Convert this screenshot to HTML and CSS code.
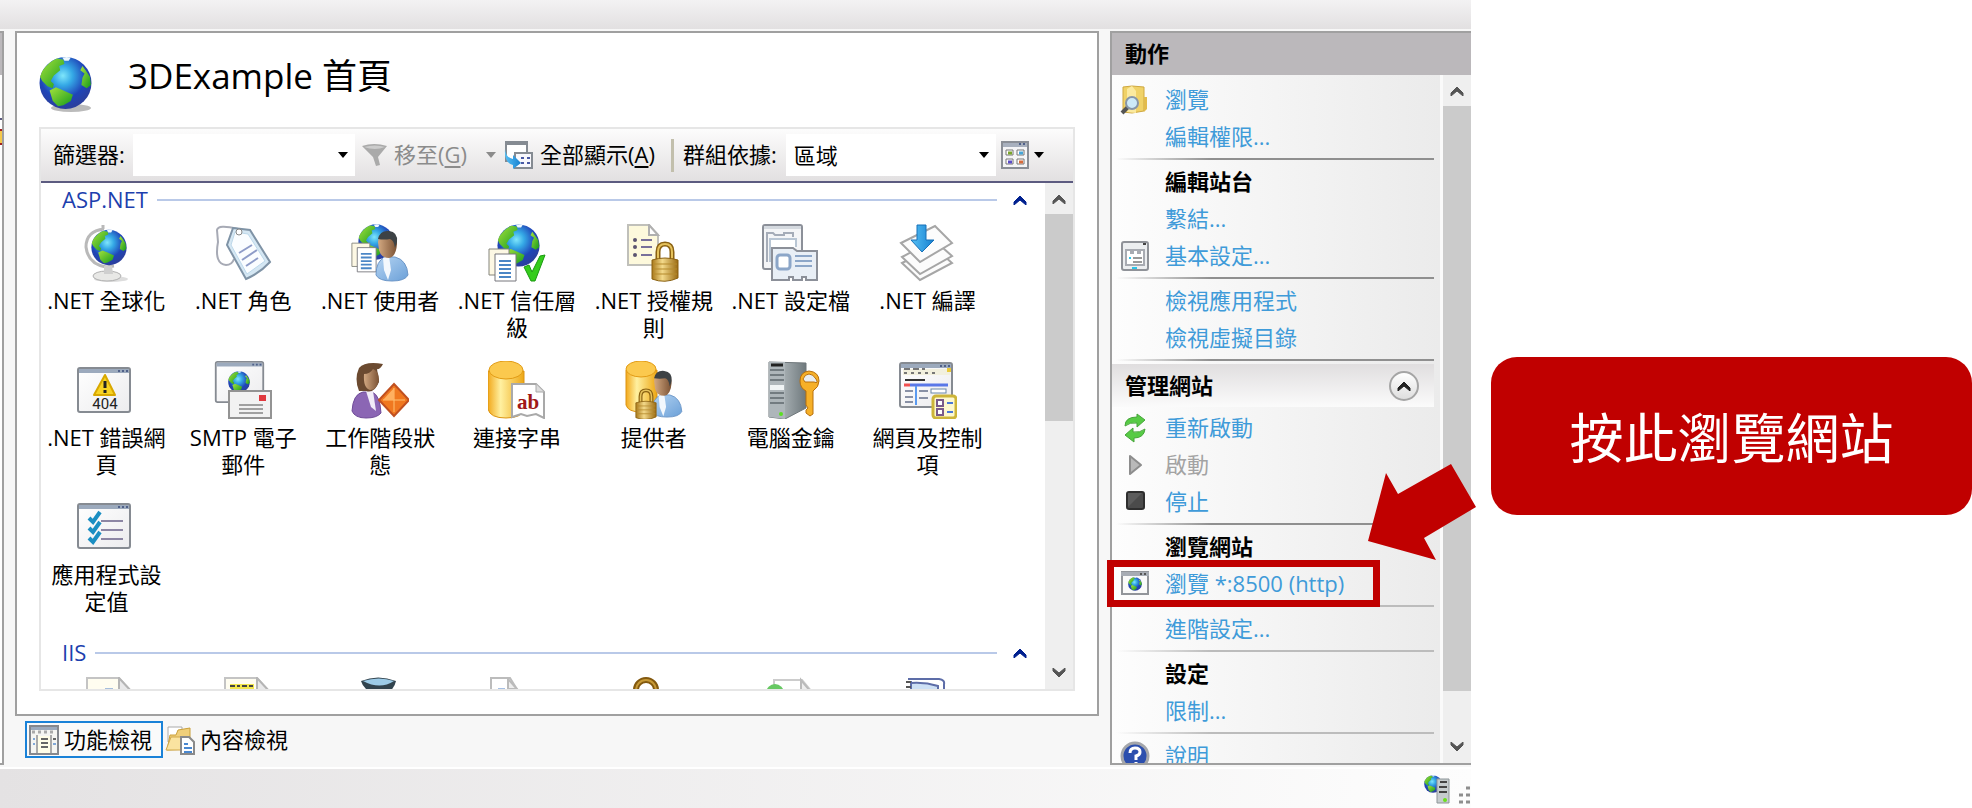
FILE: index.html
```html
<!DOCTYPE html>
<html lang="zh-Hant">
<head>
<meta charset="utf-8">
<title>3DExample 首頁</title>
<link rel="stylesheet" href="styles.css">
</head>
<body>
<svg class="defs" aria-hidden="true">
  <defs>
    <radialGradient id="sea" cx=".45" cy=".36" r=".62"><stop offset="0" stop-color="#7fe6fb"/><stop offset=".3" stop-color="#35a9e6"/><stop offset=".7" stop-color="#1f45b8"/><stop offset="1" stop-color="#2a3f9e"/></radialGradient>
    <linearGradient id="land" x1="0" y1="0" x2="1" y2="1"><stop offset="0" stop-color="#a5e23c"/><stop offset="1" stop-color="#149a1c"/></linearGradient>
    <linearGradient id="gold" x1="0" x2="1"><stop offset="0" stop-color="#f2a91c"/><stop offset=".35" stop-color="#fff0a0"/><stop offset="1" stop-color="#eda714"/></linearGradient>
    <linearGradient id="brass" x1="0" x2="1"><stop offset="0" stop-color="#a9781a"/><stop offset=".4" stop-color="#f3d98a"/><stop offset="1" stop-color="#9a6a12"/></linearGradient>
    <linearGradient id="shirt" x1="0" x2="1" y2="1"><stop offset="0" stop-color="#b5d4f2"/><stop offset="1" stop-color="#6ba0d8"/></linearGradient>
    <linearGradient id="skin" x1="0" x2="1"><stop offset="0" stop-color="#d3a982"/><stop offset="1" stop-color="#7a5133"/></linearGradient>
    <linearGradient id="pane" x1="0" x2="1" y2="1"><stop offset="0" stop-color="#ffffff"/><stop offset="1" stop-color="#ececee"/></linearGradient>
    <linearGradient id="steel" x1="0" x2="1"><stop offset="0" stop-color="#c9d0d3"/><stop offset="1" stop-color="#6f797d"/></linearGradient>
    <linearGradient id="arrow" x1="0" x2="1"><stop offset="0" stop-color="#55c0f5"/><stop offset="1" stop-color="#1780d0"/></linearGradient>
    <symbol id="globe" viewBox="0 0 50 50">
      <circle cx="25" cy="25" r="24.5" fill="url(#sea)"/>
      <path d="M3 14Q9 5 17 2l6 1 1 4-5 2 1 4-6 5-3 5 3 3-1 4-5-2-5-5-2-4z" fill="url(#land)"/>
      <path d="M10 32l6-3 7 3 9 4-2 6-7 4-5 1-5-5z" fill="url(#land)"/>
      <path d="M41 9l3 4 4 6 1 8-4 3-5-3 1-7 2-4-4-3z" fill="url(#land)"/>
      <path d="M22 1q4-1 8 0l-2 3h-4z" fill="#eef8ff"/>
    </symbol>
    <symbol id="docs" viewBox="0 0 29 34">
      <path d="M1 1h20v26H1z" fill="#fdf8e4" stroke="#85857c"/>
      <path d="M7 6h21v27H7z" fill="#fff" stroke="#77777c"/>
      <path d="M11 13h12M11 17h12M11 21h12M11 25h12M11 29h12" stroke="#4b86c6" stroke-width="2"/>
    </symbol>
    <symbol id="man" viewBox="0 0 34 52">
      <path d="M1 45q0-14 9-18h10q12 3 13 18-3 6-16 6Q4 51 1 45z" fill="url(#shirt)" stroke="#6d97c8"/>
      <path d="M8 28l6-2 2 14-3 10-4-10z" fill="#f3f8fd"/>
      <path d="M3 12Q4 2 13 2t9 12q-1 13-8 14-8 0-10-8z" fill="url(#skin)"/>
      <path d="M3 9Q5 0 14 1q9 1 8 11l-2 6q-1-8-5-9-6 1-12 0z" fill="#3d4245"/>
    </symbol>
    <symbol id="lock" viewBox="0 0 28 41">
      <path d="M7 20V11q0-8 7-8t7 8v9" fill="none" stroke="#8a6112" stroke-width="5"/>
      <path d="M7 20V11q0-8 7-8t7 8v9" fill="none" stroke="#e5c25c" stroke-width="2"/>
      <path d="M1 19q13-4 26 0v18q-13 6-26 1z" fill="url(#brass)" stroke="#8a6112"/>
      <path d="M2 23h24M2 28h24M2 33h24" stroke="#b58a2c"/>
    </symbol>
    <symbol id="window" viewBox="0 0 54 46">
      <rect x="1" y="1" width="52" height="44" rx="2" fill="url(#pane)" stroke="#868b92" stroke-width="2"/>
      <path d="M2 2h50v4H2z" fill="#9caabd"/><path d="M41 4h2m2 0h2m2 0h2" stroke="#50618a" stroke-width="2"/>
    </symbol>
    <symbol id="sheet" viewBox="0 0 46 58">
      <path d="M1 1h32l12 13v43H1z" fill="#fffdf0" stroke="#c4c4c4" stroke-width="2"/>
      <path d="M33 1v13h12z" fill="#e9e9ea" stroke="#b5b5b5" stroke-width="2"/>
    </symbol>
    <symbol id="caret" viewBox="0 0 14 10"><path d="M1 7l6-6 6 6v3L7 5l-6 5z" stroke-width="1" fill="currentColor" stroke="currentColor"/></symbol>
    <symbol id="drop" viewBox="0 0 10 6"><path d="M0 0h10L5 6z" fill="currentColor"/></symbol>
  </defs>
</svg>

<div class="page">
<div class="app">
  <header class="topbar"></header>
  <div class="workspace">
    <div class="edge"><div class="edge-head"></div><div class="edge-line"></div><div class="edge-mark"></div></div>

    <main class="main">
      <section class="panel">
        <div class="title">
          <svg class="title-icon" viewBox="0 0 53 57"><ellipse cx="32" cy="52" rx="20" ry="4" fill="#bbb"/><use href="#globe" width="53" height="54"/></svg>
          <h1>3DExample 首頁</h1>
        </div>
        <div class="box">
          <div class="toolbar">
            <label for="filter">篩選器:</label>
            <div class="combo combo-filter"><input id="filter" type="text"><svg class="drop"><use href="#drop"/></svg></div>
            <button class="tool go" disabled>
              <svg class="funnel" viewBox="0 0 27 24"><path d="M1 3q12-4 25 0L17 14l2 8-4 1-3-9z" fill="#aaa"/><path d="M3 4q11-3 21 0-10 4-21 0z" fill="#ccc"/></svg>
              <span>移至(<u>G</u>)</span><svg class="drop"><use href="#drop"/></svg>
            </button>
            <button class="tool all">
              <svg class="ico30" viewBox="0 0 30 30"><path d="M2 2h21v19H2z" fill="#fff" stroke="#858b92" stroke-width="2"/><path d="M1 1h23v4H1z" fill="#858b92"/><path d="M11 13h17v15H11z" fill="#f8f8fc" stroke="#858b92" stroke-width="2"/><path d="M17 18h3m3 0h3m-9 5h3m3 0h3" stroke="#4a5aa5" stroke-width="2"/><path d="M1 9q1 9 8 10v-4l8 8-8 6v-4Q0 23 1 9z" fill="url(#arrow)"/></svg>
              <span>全部顯示(<u>A</u>)</span>
            </button>
            <span class="divider"></span>
            <label for="group">群組依據:</label>
            <div class="combo combo-group"><select id="group"><option>區域</option></select><svg class="drop"><use href="#drop"/></svg></div>
            <button class="tool view" aria-label="檢視">
              <svg class="ico28" viewBox="0 0 28 28"><path d="M1 1h26v26H1z" fill="#f5f5f7" stroke="#8a8e96" stroke-width="2"/><path d="M2 2h24v4H2z" fill="#a8b0be"/><path d="M18 3h2m2 0h2" stroke="#50618a" stroke-width="2"/><g stroke="#777" fill="#fff"><path d="M5 9h7v5H5zM16 9h7v5h-7zM5 18h7v5H5zM16 18h7v5h-7z"/></g><path d="M7 12h4" stroke="#7aa52a" stroke-width="3"/><path d="M18 12h4" stroke="#45a5d8" stroke-width="3"/><path d="M7 21h4" stroke="#5a4bc8" stroke-width="3"/><path d="M18 21h4" stroke="#d86a3a" stroke-width="3"/></svg>
              <svg class="drop"><use href="#drop"/></svg>
            </button>
          </div>
          <div class="scroll">
            <div class="features">
              <div class="group-head"><h2>ASP.NET</h2><span></span><button aria-label="摺疊"><svg class="caret"><use href="#caret"/></svg></button></div>
              <div class="grid">
                <button class="feature"><svg viewBox="0 0 58 58"><path d="M26 1v4M27 5Q9 7 9 23q2 17 20 20l8-1" fill="none" stroke="#b9b9b9" stroke-width="3"/><ellipse cx="34" cy="55" rx="17" ry="3" fill="#ddd"/><ellipse cx="30" cy="52" rx="14" ry="5" fill="#e8e8e6" stroke="#b0b0b0"/><path d="M27 42h8l1 8h-9z" fill="#cfcfcf"/><use href="#globe" x="14" y="5" width="36" height="37"/></svg><span>.NET 全球化</span></button>
                <button class="feature"><svg viewBox="0 0 58 58"><path d="M24 5Q4 0 3 6l1 12q-4 22 8 23 6 0 8-6" fill="none" stroke="#a7aab5" stroke-width="2"/><path d="M19 4l17 2 20 32q-10 11-24 17L13 21z" fill="#d5e7f3" stroke="#7f93a6" stroke-width="2"/><path d="M21 8l13 2 17 27-18 13-16-29z" fill="#fafdff" stroke="#bcd8ea"/><circle cx="25" cy="8" r="3" fill="#fff" stroke="#888"/><path d="M25 29l13-8M28 36l15-10M32 42l12-8" stroke="#8e9cc8" stroke-width="2"/></svg><span>.NET 角色</span></button>
                <button class="feature"><svg viewBox="0 0 58 58"><use href="#globe" x="7" width="36" height="36"/><use href="#docs" y="18" width="26" height="31"/><use href="#man" x="24" y="6" width="34" height="52"/></svg><span>.NET 使用者</span></button>
                <button class="feature"><svg viewBox="0 0 58 58"><use href="#globe" x="9" width="43" height="43"/><use href="#docs" y="24" width="29" height="34"/><path d="M36 43l5-2 3 7 8-16 5-1-10 26h-4z" fill="#35cc1c" stroke="#1a9a10"/></svg><span>.NET 信任層級</span></button>
                <button class="feature"><svg viewBox="0 0 58 58"><path d="M3 1h21l9 10v30H3z" fill="#fdf9dc" stroke="#c0c0ba" stroke-width="2"/><path d="M24 1v10h9z" fill="#fff" stroke="#b0b0b0" stroke-width="2"/><g fill="#5b5470"><circle cx="10" cy="16" r="2"/><circle cx="10" cy="23" r="2"/><circle cx="10" cy="31" r="2"/></g><path d="M16 16h11M16 23h11M16 31h11" stroke="#78709a" stroke-width="2"/><use href="#lock" x="26" y="17" width="28" height="41"/></svg><span>.NET 授權規則</span></button>
                <button class="feature"><svg viewBox="0 0 58 58"><rect x="1" y="1" width="39" height="44" rx="2" fill="#f4f5f7" stroke="#8c9099" stroke-width="2"/><path d="M2 2h37v3H2z" fill="#d5dae0"/><path d="M5 38V9h6l2 2h9v-2h9v4" fill="none" stroke="#a5acb8" stroke-width="2"/><path d="M8 38V15h26v8" fill="#fff" stroke="#b9c6d4" stroke-width="2"/><path d="M10 24h21l4 3h20v29H44v-3h-4v3h-9v-3h-4v3H10z" fill="#e9eff6" stroke="#8c9099" stroke-width="2"/><rect x="15" y="31" width="13" height="14" rx="3" fill="#fff" stroke="#8ca6c8" stroke-width="3"/><path d="M33 32h17M33 37h17M33 42h17" stroke="#8ca6c8" stroke-width="2"/></svg><span>.NET 設定檔</span></button>
                <button class="feature"><svg viewBox="0 0 58 58"><g fill="#fcfcfc" stroke="#a6a6a6" stroke-width="2"><path d="M3 39l32-16 18 16-32 17z"/><path d="M3 33l32-17 18 16-32 18z"/><path d="M2 19L36 2l17 17-32 19z"/></g><path d="M18 1h9v15h8L23 28 12 16h6z" fill="url(#arrow)" stroke="#1770b8"/></svg><span>.NET 編譯</span></button>
                <button class="feature"><svg viewBox="0 0 58 58"><use href="#window" y="6" width="54" height="46"/><path d="M28 14l10 20H17z" fill="#f8d324" stroke="#d8a800" stroke-width="2" stroke-linejoin="round"/><path d="M28 20v7m0 2v3" stroke="#222" stroke-width="3"/><text x="28" y="48" class="t404">404</text></svg><span>.NET 錯誤網頁</span></button>
                <button class="feature"><svg viewBox="0 0 58 58"><use href="#window" width="51" height="42" preserveAspectRatio="none"/><use href="#globe" x="14" y="10" width="22" height="22"/><path d="M15 30h42v27H15z" fill="#f2f2f2" stroke="#939393" stroke-width="2"/><path d="M45 34h7v6h-7z" fill="#e0393e"/><path d="M25 44h24M25 48h24M25 52h24" stroke="#a0a0a0" stroke-width="2"/></svg><span>SMTP 電子郵件</span></button>
                <button class="feature"><svg viewBox="0 0 58 58"><path d="M1 50q1-17 11-19h9q8 3 9 21-4 5-15 5T1 50z" fill="#8b66b4" stroke="#6f4c98"/><path d="M15 30h7l3 20-5-4z" fill="#f1ecf7"/><path d="M8 30Q3 18 8 7q6-7 24-4-3 6-6 5l2 13q-5 12-13 9z" fill="#6b4a30"/><path d="M13 13q6 0 9-5 6 2 6 11-2 10-9 10-7-2-6-16z" fill="url(#skin)"/><path d="M43 23l15 16-15 16-15-16z" fill="#f07820" stroke="#c05020" stroke-width="2"/><path d="M43 27v24M32 39h22" stroke="#ffc070"/><path d="M43 27L32 39h11z" fill="#ffb060"/></svg><span>工作階段狀態</span></button>
                <button class="feature"><svg viewBox="0 0 58 58"><path d="M0 10v38q2 9 18 9t18-9V10z" fill="url(#gold)" stroke="#dc9412"/><ellipse cx="18" cy="9" rx="17" ry="9" fill="#fbc94e" stroke="#e29b14"/><path d="M24 23h24l8 8v26l-8-4-9 2-6-2-9 3z" fill="#fff" stroke="#a9a9a9" stroke-width="2"/><path d="M48 23v8h8" fill="#ddd" stroke="#a9a9a9"/><text x="40" y="48" class="tab-text">ab</text></svg><span>連接字串</span></button>
                <button class="feature"><svg viewBox="0 0 58 58"><path d="M1 9v35q2 7 15 7t16-7V9z" fill="url(#gold)" stroke="#dc9412"/><ellipse cx="16" cy="8" rx="15" ry="8" fill="#fbc94e" stroke="#e29b14"/><use href="#man" x="26" y="9" width="32" height="48"/><use href="#lock" x="10" y="27" width="22" height="32"/></svg><span>提供者</span></button>
                <button class="feature"><svg viewBox="0 0 58 58"><path d="M7 1l37 1v45L23 58 7 56z" fill="url(#steel)" stroke="#6f777b"/><path d="M7 1h16v57L7 56z" fill="#aeb6ba"/><path d="M9 4h12" stroke="#222" stroke-width="3"/><path d="M8 9h14M8 14h14M8 19h14M8 32h14M8 37h14M8 42h14" stroke="#727b80" stroke-width="2"/><path d="M8 24h14v5H8z" fill="#f0f4f5"/><circle cx="19" cy="53" r="2" fill="#5be020"/><path d="M47 10q10 1 10 10 0 6-6 10v23l-3 2-4-3v-3l2-2-2-3V30q-6-3-6-10 0-9 9-10z" fill="#f6b028" stroke="#b8700c"/><path d="M41 18q2-5 6-5t7 5-2 3h-9z" fill="#e9eef0" stroke="#b8700c"/></svg><span>電腦金鑰</span></button>
                <button class="feature"><svg viewBox="0 0 58 58"><use href="#window" y="1" width="54" height="46"/><path d="M4 8h47v6H4z" fill="#f2f0de"/><path d="M5 8h6m3 0h6m3 0h3M5 12h3m4 0h3m4 0h3m4 0h3m4 0h3" stroke="#777" stroke-width="2"/><path d="M48 7h4v4h-4z" fill="#e9c93a"/><path d="M6 19h20" stroke="#333" stroke-width="2"/><path d="M5 24h6" stroke="#f05050" stroke-width="3"/><path d="M11 24h38" stroke="#5a78e8" stroke-width="3"/><path d="M17 25v19" stroke="#5a9af0" stroke-width="2"/><path d="M6 30h8M6 36h8M6 41h8M20 30h9M20 37h9" stroke="#8890a5" stroke-width="2"/><rect x="32" y="28" width="15" height="4" fill="#fff" stroke="#6a88a8"/><rect x="34" y="35" width="23" height="22" rx="3" fill="#fdf8cf" stroke="#cdb53a" stroke-width="3"/><path d="M38 39h6v6h-6zM38 48h6v6h-6z" fill="#fff" stroke="#7a5a8a" stroke-width="2"/><path d="M48 42h6M48 51h6" stroke="#4a78d8" stroke-width="2"/></svg><span>網頁及控制項</span></button>
                <button class="feature"><svg viewBox="0 0 58 58"><use href="#window" y="5" width="54" height="46"/><path d="M24 23h22M24 32h22M24 41h22" stroke="#8c86a4" stroke-width="2"/><path d="M12 20l4 4 7-10M12 30l4 4 7-10M12 40l4 4 7-10" fill="none" stroke="#1b8ec2" stroke-width="4"/></svg><span>應用程式設定值</span></button>
              </div>
              <div class="group-head"><h2>IIS</h2><span></span><button aria-label="摺疊"><svg class="caret"><use href="#caret"/></svg></button></div>
              <div class="grid" aria-hidden="true">
                <div class="feature"><svg viewBox="0 0 58 58"><use href="#sheet" x="9" width="46" height="58"/><path d="M28 13h8" stroke="#4b7fc8" stroke-width="3"/></svg></div>
                <div class="feature"><svg viewBox="0 0 58 58"><use href="#sheet" x="10" width="46" height="58"/><path d="M16 7h24v7H16z" fill="#f2e64a"/><path d="M16 9h5m2 0h3m2 0h5m2 0h4M16 13h3m2 0h6m2 0h3m2 0h6" stroke="#444" stroke-width="2"/></svg></div>
                <div class="feature"><svg viewBox="0 0 58 58"><path d="M10 4q17-7 35 0-2 10-13 14h-8Q12 12 10 4z" fill="#31434e"/><path d="M12 4q16-5 31 0-14 9-31 0z" fill="#9ccbe8"/></svg></div>
                <div class="feature"><svg viewBox="0 0 58 58"><path d="M3 1h19l8 13v20H3z" fill="#fff" stroke="#bcbcbc" stroke-width="2"/><path d="M20 2v10h9z" fill="#eee" stroke="#bbb" stroke-width="2"/><path d="M10 13h7" stroke="#4b7fc8" stroke-width="3"/></svg></div>
                <div class="feature"><svg viewBox="0 0 58 58"><circle cx="21" cy="13" r="10" fill="none" stroke="#83590f" stroke-width="6"/><circle cx="21" cy="13" r="10" fill="none" stroke="#c79a37" stroke-width="2"/></svg></div>
                <div class="feature"><svg viewBox="0 0 58 58"><path d="M12 3h28l10 12v30H12z" fill="#fff" stroke="#ccc" stroke-width="2"/><path d="M39 3v12h10z" fill="#eee" stroke="#bbb" stroke-width="2"/><circle cx="13" cy="16" r="9" fill="#66c862"/></svg></div>
                <div class="feature"><svg viewBox="0 0 58 58"><path d="M11 30V6l27 2v22z" fill="#cde0f5"/><path d="M9 2h31q6 1 5 5v20M12 6q14-1 27 3v20M12 4v24" fill="none" stroke="#5d6da8" stroke-width="2"/><path d="M7 5h5m-5 5h5" stroke="#555" stroke-width="2"/></svg></div>
              </div>
            </div>
            <div class="bar" aria-hidden="true"><i class="bar-end"><svg class="caret"><use href="#caret"/></svg></i><i class="thumb"></i><i class="bar-end down"><svg class="caret"><use href="#caret"/></svg></i></div>
          </div>
        </div>
      </section>
      <nav class="tabs">
        <button class="tab active"><svg class="ico30" viewBox="0 0 30 30"><path d="M1 1h28v28H1z" fill="#f5f5f2" stroke="#85888e" stroke-width="2"/><path d="M2 2h26v3H2z" fill="#9caabd"/><path d="M3 7h3m3 0h3m3 0h3m3 0h3" stroke="#aaa" stroke-width="3"/><path d="M8 10v18M22 10v18" stroke="#aaa" stroke-width="2"/><path d="M9 11h12v17H9z" fill="#fffde8"/><path d="M12 14h7M12 18h7M12 22h7M24 14h3" stroke="#666" stroke-width="2"/><path d="M4 14h2m-2 5h2m18 0h3" stroke="#80a8d8" stroke-width="2"/></svg>功能檢視</button>
        <button class="tab"><svg class="ico30" viewBox="0 0 30 30"><path d="M3 2h14v15H3z" fill="#fff" stroke="#aaa"/><path d="M2 25l3-15h6l2-5 12-2v21z" fill="#f0cf7a" stroke="#caa03a"/><path d="M1 25l5-13h14l-4 13z" fill="#fae3a0" stroke="#d0a84a"/><path d="M16 12h8l5 5v12H16z" fill="#fff" stroke="#8a8a8a" stroke-width="2"/><path d="M19 19h4m-4 4h8m-8 4h8" stroke="#4a88d0" stroke-width="2"/></svg>內容檢視</button>
      </nav>
    </main>

    <aside class="actions">
      <h2 class="actions-head">動作</h2>
      <div class="actions-body">
        <div class="list">
          <a class="row" href="#"><svg class="ico30" viewBox="0 0 30 30"><path d="M3 2l9-1 12 1v24l-12 2-9-1z" fill="#f0d268" stroke="#cfa840"/><path d="M12 1l4 5v22l-9-1V4z" fill="#fbeaa0"/><path d="M24 12h3v12l-3 3z" fill="#e2bb4c"/><path d="M2 28l7-7" stroke="#555" stroke-width="4"/><circle cx="12" cy="18" r="6" fill="#cdeaf8" stroke="#8796a8" stroke-width="2"/></svg>瀏覽</a>
          <a class="row" href="#">編輯權限...</a>
          <hr>
          <h3 class="row">編輯站台</h3>
          <a class="row" href="#">繫結...</a>
          <a class="row" href="#"><svg class="ico30" viewBox="0 0 30 30"><rect x="2" y="1" width="26" height="28" rx="2" fill="#eceef0" stroke="#8f9298" stroke-width="2"/><path d="M23 3h3" stroke="#444" stroke-width="2"/><path d="M6 9h5v3h2V9h5v3h2V9h4v15H6z" fill="#fff" stroke="#a8abb2" stroke-width="2"/><path d="M13 17h9M13 21h9" stroke="#999" stroke-width="2"/><path d="M9 17h2m1 10h5" stroke="#2bc4e8" stroke-width="2"/></svg>基本設定...</a>
          <hr>
          <a class="row" href="#">檢視應用程式</a>
          <a class="row" href="#">檢視虛擬目錄</a>
          <hr>
          <div class="section"><h3>管理網站</h3><button class="round" aria-label="摺疊"><svg class="caret"><use href="#caret"/></svg></button></div>
          <a class="row" href="#"><svg class="ico30" viewBox="0 0 30 30"><path d="M5 13Q5 4 17 4V1l8 6-8 7v-4q-7-1-12 3z" fill="#57cb45" stroke="#46a53a"/><path d="M25 16q-1 9-11 9v4l-9-7 8-7v4q7 1 12-3z" fill="#57cb45" stroke="#46a53a"/></svg>重新啟動</a>
          <span class="row off"><svg class="ico30" viewBox="0 0 30 30"><path d="M10 6l11 9-11 9z" fill="#b9b9b9" stroke="#8d8d8d" stroke-width="2" stroke-linejoin="round"/></svg>啟動</span>
          <a class="row" href="#"><svg class="ico30" viewBox="0 0 30 30"><rect x="7" y="5" width="17" height="17" rx="2" fill="#4b4b4b" stroke="#2e2e2e" stroke-width="2"/><path d="M8 20V6h14z" fill="#5c5c5c"/></svg>停止</a>
          <hr>
          <h3 class="row">瀏覽網站</h3>
          <a class="row marked" href="#"><svg class="ico30" viewBox="0 0 30 30"><path d="M2 3h26v22H2z" fill="#fafafa" stroke="#92959a" stroke-width="2"/><path d="M1 3h28v4H1z" fill="#a7acb4"/><path d="M20 5h2m2 0h2" stroke="#555" stroke-width="2"/><use href="#globe" x="8" y="8" width="14" height="14"/></svg>瀏覽 *:8500 (http)
            <svg class="pointer" viewBox="0 0 108 96"><path d="M0 77L18 9l12 21L83 0l25 43-52 31 12 22z" fill="#c00000"/></svg></a>
          <hr class="soft">
          <a class="row" href="#">進階設定...</a>
          <hr class="soft">
          <h3 class="row">設定</h3>
          <a class="row" href="#">限制...</a>
          <hr class="soft">
          <a class="row" href="#"><svg class="ico30" viewBox="0 0 30 30"><circle cx="15" cy="15" r="13" fill="#2c4fae" stroke="#a4a6aa" stroke-width="3"/><path d="M10 12q0-5 5-5t5 4q0 3-4 4v4m0 2v3" fill="none" stroke="#fff" stroke-width="3"/></svg>說明</a>
        </div>
        <div class="bar" aria-hidden="true"><i class="bar-end"><svg class="caret"><use href="#caret"/></svg></i><i class="thumb"></i><i class="bar-end down"><svg class="caret"><use href="#caret"/></svg></i></div>
      </div>
    </aside>
  </div>
  <footer class="status">
    <svg class="ico30" viewBox="0 0 30 30"><use href="#globe" x="1" y="1" width="18" height="18"/><path d="M14 5h12v24H14z" fill="#c6ccce" stroke="#8d9598"/><path d="M17 8h7M16 13h8M16 18h8" stroke="#444" stroke-width="2"/><circle cx="22" cy="26" r="2" fill="#6be01c"/></svg>
    <svg class="grip" viewBox="0 0 14 22"><path d="M9 2h4M2 9h4m3 0h4M2 16h4m3 0h4" stroke="#8e8e8e" stroke-width="3"/></svg>
  </footer>
</div>
<div class="note"><p class="callout">按此瀏覽網站</p></div>
</div>
</body>
</html>
```
FILE: styles.css
```css
*, *::after { box-sizing: border-box; }
body {
  margin: 0;
  overflow: hidden;
  background: #fff;
  color: #000;
  font: 22px/27px "Open Sans", "Noto Sans CJK TC", sans-serif;
}
h1, h2, h3, p { margin: 0; font-weight: 400; }
button, input, select { font: inherit; color: inherit; border: 0; padding: 0; margin: 0; background: none; }
svg { display: block; flex: none; }
.defs { position: absolute; width: 0; height: 0; }

.page { display: grid; grid-template-columns: minmax(0, 1471fr) minmax(0, 501fr); height: 100vh; }
.app {
  display: grid;
  grid-template-rows: 29px minmax(0, 1fr) 39px;
  min-height: 0;
  height: 100vh;
  background: #f7f7f7;
}
.topbar { background: linear-gradient(#f3f2f3, #e2e0e1); }
.workspace { display: flex; min-height: 0; padding: 2px 0; border-bottom: 2px solid #fff; }

.edge { width: 4px; border: solid #a0a0a0; border-width: 2px 2px 2px 0; background: #fff; }
.edge-head { height: 42px; background: #bbb8bb; }
.edge-line { height: 2px; margin-top: 43px; background: #5c5b80; }
.edge-mark { height: 16px; margin-top: 9px; background: #f5c84a; border: solid #a02020; border-width: 2px 0; }

.main { flex: 1; min-width: 0; display: flex; flex-direction: column; margin: 0 12px 0 11px; }
.panel {
  flex: 1;
  min-height: 0;
  display: flex;
  flex-direction: column;
  padding: 23px 22px;
  border: 2px solid #a0a0a0;
  background: #fff;
}
.title { display: flex; gap: 36px; height: 71px; }
.title-icon { width: 53px; height: 57px; }
.title h1 { font-size: 35px; line-height: 40px; }
.box { flex: 1; min-height: 0; display: flex; flex-direction: column; border: 2px solid #e6e6e6; }

.toolbar {
  display: flex;
  align-items: center;
  height: 54px;
  flex: none;
  padding: 0 12px;
  border-bottom: 2px solid #5c5b80;
  background: linear-gradient(#fcfcfc, #e2e0e1);
  white-space: nowrap;
}
.toolbar label, .toolbar .tool span { padding-bottom: 2px; }
.combo { position: relative; display: flex; height: 42px; background: #fff; }
.combo input, .combo select { width: 100%; padding: 0 8px; appearance: none; }
.combo .drop { position: absolute; right: 7px; top: 18px; }
.combo-filter { flex: 222 1 0; margin: 0 6px 0 8px; }
.combo-group { flex: 210 1 0; margin: 0 5px 0 9px; }
.drop { width: 10px; height: 6px; }
.tool { display: flex; align-items: center; }
.tool u { text-underline-offset: 3px; }
.go { gap: 6px; color: #8b8b8b; }
.go .drop { margin-left: 13px; }
.funnel { width: 27px; height: 24px; }
.all { gap: 6px; margin-left: 8px; }
.view { gap: 5px; margin-right: 17px; }
.divider { width: 3px; height: 33px; margin: 0 9px 0 16px; background: #c2bfac; }
.ico30 { width: 30px; height: 30px; }
.ico28 { width: 28px; height: 28px; }

.scroll { flex: 1; min-height: 0; display: flex; }
.features { flex: 1; min-width: 0; overflow: hidden; padding-right: 18px; }
.group-head { display: flex; align-items: center; height: 33px; padding: 0 0 0 21px; color: #1d3fae; }
.group-head h2 { font-size: 22px; }
.group-head span { flex: 1; height: 2px; margin: 0 16px 0 9px; background: #b9c9e8; }
.group-head button { color: #00208f; }
.caret { width: 14px; height: 10px; }
.grid {
  display: grid;
  grid-template-columns: repeat(7, minmax(0, 1fr));
  grid-auto-rows: 119px;
  gap: 18px 0;
  margin-left: -3px;
  padding: 8px 31px 19px 0;
}
.feature { display: flex; flex-direction: column; align-items: center; gap: 5px; padding: 0 6px; text-align: center; }
.feature svg { width: 58px; height: 58px; }
.t404 { font: 15px Roboto, sans-serif; text-anchor: middle; fill: #222; }
.tab-text { font: bold 21px "Liberation Serif", serif; text-anchor: middle; fill: #a01818; }

.bar { display: flex; flex-direction: column; width: 28px; background: #efefef; color: #555; }
.bar-end { display: grid; place-items: center; height: 31px; flex: none; }
.down { margin-top: auto; transform: rotate(180deg); }
.thumb { background: #cbcbcb; }
.features + .bar .thumb { flex: 0 0 41%; }
.list + .bar .thumb { flex: 0 0 85%; }

.tabs { display: flex; padding: 5px 0 7px 10px; }
.tab { display: flex; align-items: center; gap: 5px; height: 37px; padding: 0 9px 0 2px; border: 2px solid transparent; }
.tab + .tab { padding-left: 0; }
.tab.active { border-color: #1a82d8; background: #fafafa; }

.actions { flex: 0 0 361px; display: flex; flex-direction: column; min-height: 0; border: solid #a0a0a0; border-width: 2px 0 2px 2px; }
.main { margin-right: 11px; }
.actions-head { flex: none; height: 42px; padding: 0 13px; font-size: 22px; font-weight: 700; line-height: 40px; background: #bbb8bb; }
.actions-body { flex: 1; min-height: 0; display: flex; }
.list {
  position: relative;
  z-index: 1;
  flex: 1;
  min-width: 0;
  padding: 6px 6px 0 0;
  background: linear-gradient(90deg, #fdfdfd, #ebebeb);
  border-right: 3px solid #fafafa;
  clip-path: inset(0 -40px 0 -8px);
}
.row { display: flex; align-items: center; position: relative; height: 37px; padding-left: 53px; color: #3f9bd9; font-size: 22px; text-decoration: none; white-space: nowrap; }
.row > .ico30 { margin: 0 15px 0 -45px; }
h3.row { color: #000; font-weight: 700; }
.row.off { color: #a3a3a3; }
hr { height: 2px; margin: 3px 0 3px 4px; border: 0; background: linear-gradient(90deg, transparent, #8f8f8f 30%); }
hr.soft { background: linear-gradient(90deg, transparent, #bcbcbc 30%); }
.section { display: flex; align-items: center; justify-content: space-between; height: 43px; margin-bottom: 2px; padding: 0 15px 0 13px; background: linear-gradient(#e0dedf, #fbfbfb); }
.section h3 { font-size: 22px; font-weight: 700; }
.round { display: grid; place-items: center; width: 30px; height: 30px; border: 2px solid #a5a5a5; border-radius: 50%; background: linear-gradient(#fff, #dedede); color: #222; }
.marked::after { content: ""; position: absolute; left: -5px; top: -5px; width: 273px; height: 47px; border: 7px solid #c00000; }
.pointer { position: absolute; left: 256px; top: -101px; width: 108px; height: 96px; }

.status { display: flex; justify-content: flex-end; gap: 4px; padding-top: 5px; background: linear-gradient(90deg, #e4e2e3, #fdfdfd); }
.status .ico30 { margin-right: 4px; }
.status { gap: 0; }
.grip { width: 14px; height: 22px; margin-top: 12px; }

.note { display: grid; align-items: center; padding: 64px 0 0 20px; }
.callout {
  padding: 40px 0;
  border-radius: 26px;
  background: #c00000;
  color: #fff;
  font-family: "AR PL UKai TW", "BiauKai", "DFKai-SB", "Noto Sans CJK TC", sans-serif;
  font-size: 54px;
  font-weight: 400;
  line-height: 78px;
  text-align: center;
}
```
